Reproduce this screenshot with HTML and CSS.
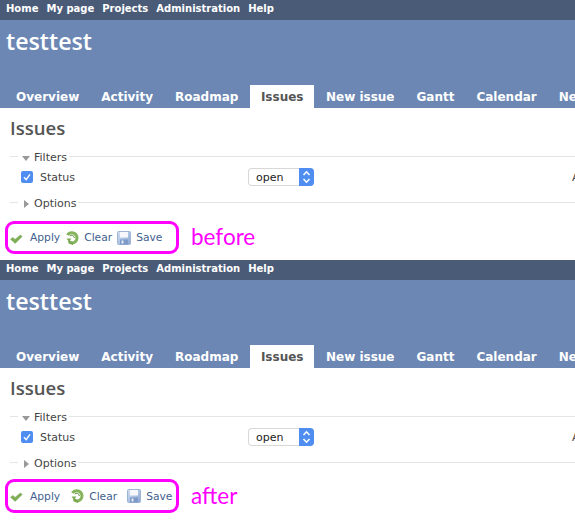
FILE: index.html
```html
<!DOCTYPE html>
<html>
<head>
    <title>Issues - testtest</title>
    <link rel="stylesheet" href="styles.css">
</head>
<body>
    <svg class="defs" width="0" height="0">
        <defs>
            <linearGradient id="floppy-fill" x1="0" y1="0" x2="1" y2="1">
                <stop offset="0" stop-color="#d3e0f2"/>
                <stop offset="1" stop-color="#8ba6d2"/>
            </linearGradient>
            <symbol id="icon-apply" viewBox="0 0 14 14">
                <path d="M.5 8.2 L3 6.4 L5 8.4 L10.4 4 L12.2 5.4 L5.2 12.4 Z" fill="#7fae55" stroke="#6a9a48" stroke-width=".4"/>
            </symbol>
            <symbol id="icon-clear" viewBox="0 0 14 14">
                <path d="M2.4 4 A5.2 5.2 0 1 1 7.4 12" fill="none" stroke="#86b45c" stroke-width="3"/>
                <path d="M4.8 5 A2.8 2.8 0 0 1 9.4 7" fill="none" stroke="#5f8f3e" stroke-width="1"/>
                <path d="M1.6 7.4 L6.4 7.4 L4.8 9.4 L8 11 L8 14 L3.6 12.6 L3 9.6 Z" fill="#7aa84e"/>
            </symbol>
            <symbol id="icon-save" viewBox="0 0 14 14">
                <rect x=".5" y=".5" width="13" height="13" rx="1" fill="url(#floppy-fill)" stroke="#9fb5d8"/>
                <rect x="3" y="1" width="8" height="5.5" fill="#f6f8fc"/>
                <rect x="3" y="8.5" width="8" height="5" fill="#7c99c8"/>
                <rect x="4.5" y="9.5" width="2" height="3" fill="#e4ebf5"/>
            </symbol>
            <symbol id="icon-updown" viewBox="0 0 15 18">
                <path d="M4.5 7 L7.5 3.8 L10.5 7 M4.5 11 L7.5 14.2 L10.5 11" fill="none" stroke="#fff" stroke-width="1.5"/>
            </symbol>
        </defs>
    </svg>

    <div class="panel">
        <div class="top-menu">
            <a href="#">Home</a>
            <a href="#">My page</a>
            <a href="#">Projects</a>
            <a href="#">Administration</a>
            <a href="#">Help</a>
        </div>
        <div class="header">
            <h1>testtest</h1>
            <ul class="tabs">
                <li><a href="#">Overview</a></li>
                <li><a href="#">Activity</a></li>
                <li><a href="#">Roadmap</a></li>
                <li><a class="selected" href="#">Issues</a></li>
                <li><a href="#">New issue</a></li>
                <li><a href="#">Gantt</a></li>
                <li><a href="#">Calendar</a></li>
                <li><a href="#">News</a></li>
            </ul>
        </div>
        <div class="content">
            <h2>Issues</h2>
            <fieldset class="group">
                <legend><span class="arrow-down"></span>Filters</legend>
                <div class="filter-row">
                    <span class="checkbox"><svg width="12" height="12" viewBox="0 0 12 12"><path d="M3 6.2 L5.2 8.6 L9 3.4" fill="none" stroke="#fff" stroke-width="1.4"/></svg></span>
                    <label class="filter-name">Status</label>
                    <span class="select">open<span class="select-btn"><svg width="15" height="18"><use href="#icon-updown"/></svg></span></span>
                    <span class="add-filter">Add filter</span>
                </div>
            </fieldset>
            <fieldset class="group closed">
                <legend><span class="arrow-right"></span>Options</legend>
            </fieldset>
            <div class="buttons-row">
                <div class="highlight buttons-before">
                    <a href="#"><svg width="14" height="14"><use href="#icon-apply"/></svg>Apply</a>
                    <a href="#"><svg width="14" height="14"><use href="#icon-clear"/></svg>Clear</a>
                    <a href="#"><svg width="14" height="14"><use href="#icon-save"/></svg>Save</a>
                </div>
                <span class="note">before</span>
            </div>
        </div>
    </div>

    <div class="panel">
        <div class="top-menu">
            <a href="#">Home</a>
            <a href="#">My page</a>
            <a href="#">Projects</a>
            <a href="#">Administration</a>
            <a href="#">Help</a>
        </div>
        <div class="header">
            <h1>testtest</h1>
            <ul class="tabs">
                <li><a href="#">Overview</a></li>
                <li><a href="#">Activity</a></li>
                <li><a href="#">Roadmap</a></li>
                <li><a class="selected" href="#">Issues</a></li>
                <li><a href="#">New issue</a></li>
                <li><a href="#">Gantt</a></li>
                <li><a href="#">Calendar</a></li>
                <li><a href="#">News</a></li>
            </ul>
        </div>
        <div class="content">
            <h2>Issues</h2>
            <fieldset class="group">
                <legend><span class="arrow-down"></span>Filters</legend>
                <div class="filter-row">
                    <span class="checkbox"><svg width="12" height="12" viewBox="0 0 12 12"><path d="M3 6.2 L5.2 8.6 L9 3.4" fill="none" stroke="#fff" stroke-width="1.4"/></svg></span>
                    <label class="filter-name">Status</label>
                    <span class="select">open<span class="select-btn"><svg width="15" height="18"><use href="#icon-updown"/></svg></span></span>
                    <span class="add-filter">Add filter</span>
                </div>
            </fieldset>
            <fieldset class="group closed">
                <legend><span class="arrow-right"></span>Options</legend>
            </fieldset>
            <div class="buttons-row">
                <div class="highlight buttons-after">
                    <a href="#"><svg width="14" height="14"><use href="#icon-apply"/></svg>Apply</a>
                    <a href="#"><svg width="14" height="14"><use href="#icon-clear"/></svg>Clear</a>
                    <a href="#"><svg width="14" height="14"><use href="#icon-save"/></svg>Save</a>
                </div>
                <span class="note">after</span>
            </div>
        </div>
    </div>
</body>
</html>
```
FILE: styles.css
```css
html, body {
    margin: 0;
    padding: 0;
    overflow: hidden;
}

body {
    font-family: "DejaVu Sans", Verdana, sans-serif;
    font-size: 11px;
    color: #444;
    background-color: #fff;
}

a {
    text-decoration: none;
}

.defs {
    position: absolute;
}

.panel {
    width: 575px;
    height: 260px;
    overflow: hidden;
}

.top-menu {
    display: flex;
    gap: 8px;
    box-sizing: border-box;
    height: 20px;
    padding: 0 0 3px 6px;
    align-items: center;
    background-color: #4a5b78;
}

.top-menu a {
    color: #fff;
    font-size: 10px;
    font-weight: bold;
    white-space: nowrap;
}

.header {
    height: 88px;
    position: relative;
    background-color: #6c87b4;
}

.header h1 {
    margin: 0;
    padding: 6px 0 0 6px;
    font-family: "Open Sans", sans-serif;
    font-size: 23.2px;
    line-height: 30px;
    font-weight: 600;
    color: #fff;
}

.tabs {
    display: flex;
    gap: 2px;
    margin: 0;
    padding: 0 0 0 6px;
    list-style: none;
    position: absolute;
    left: 0;
    bottom: 0;
    white-space: nowrap;
}

.tabs a {
    display: block;
    height: 23px;
    line-height: 24px;
    padding: 0 10px;
    color: #fff;
    font-size: 12px;
    font-weight: bold;
}

.tabs a.selected {
    padding: 0 10.5px;
    background-color: #fff;
    color: #555;
}

.content {
    padding: 9px 0 0 10px;
}

.content h2 {
    margin: 0;
    height: 22px;
    font-family: "Open Sans", sans-serif;
    font-size: 18.6px;
    line-height: 22px;
    font-weight: 600;
    color: #555;
}

.group {
    margin: 8px -10px 0 0;
    padding: 0;
    border: 0;
    border-top: 1px solid #e4e4e4;
}

.group legend {
    margin-left: 8px;
    padding: 4px 2px 0 4px;
    font-size: 11px;
    line-height: 14px;
    color: #444;
}

.arrow-down,
.arrow-right {
    display: inline-block;
    width: 0;
    height: 0;
    margin-right: 4px;
}

.arrow-down {
    margin-left: 0;
    vertical-align: 0;
    border-top: 5px solid #999;
    border-left: 4px solid transparent;
    border-right: 4px solid transparent;
}

.arrow-right {
    margin-left: 2px;
    margin-right: 5px;
    vertical-align: -1px;
    border-left: 5px solid #999;
    border-top: 4px solid transparent;
    border-bottom: 4px solid transparent;
}

.filter-row {
    display: flex;
    align-items: center;
    height: 18px;
    margin-top: 3px;
    padding-left: 11px;
    white-space: nowrap;
}

.checkbox {
    display: flex;
    width: 12px;
    height: 12px;
    border-radius: 2px;
    background-color: #4f8ef0;
}

.filter-name {
    width: 208px;
    margin-left: 7px;
}

.select {
    display: flex;
    align-items: center;
    justify-content: space-between;
    box-sizing: border-box;
    width: 66px;
    height: 18px;
    padding-left: 8px;
    border-radius: 4px;
    background-color: #fff;
    box-shadow: 0 0 0 1px #d8d8d8 inset;
    color: #222;
    overflow: hidden;
}

.select-btn {
    display: flex;
    width: 15px;
    height: 18px;
    background-color: #4f8ef0;
}

.add-filter {
    margin-left: 258px;
}

.closed {
    margin-top: 7px;
}

.buttons-row {
    display: flex;
    align-items: center;
    gap: 12px;
    margin: 10px 0 0 -5px;
}

.highlight {
    display: flex;
    align-items: center;
    box-sizing: border-box;
    width: 174px;
    height: 33px;
    padding-left: 2px;
    border: 3px solid #f0f;
    border-radius: 9px;
}

.highlight a {
    display: flex;
    align-items: center;
    font-size: 10.7px;
    color: #3f5f8f;
}

.highlight svg {
    margin-right: 6px;
}

.highlight a + a svg {
    margin-right: 5px;
}

.buttons-before a + a {
    margin-left: 5px;
}

.buttons-after a + a {
    margin-left: 10px;
}

.buttons-after {
    height: 34px;
    margin-top: -2px;
}

.note {
    margin-top: -3px;
    font-family: "Lato", sans-serif;
    font-size: 22.5px;
    color: #f0f;
}
```
